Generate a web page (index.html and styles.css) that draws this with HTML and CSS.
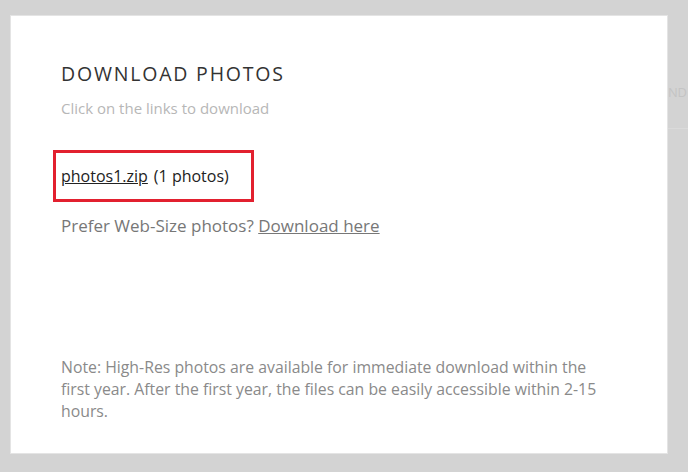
FILE: index.html
```html
<!DOCTYPE html>
<html>
<head>
<meta charset="utf-8">
<link rel="stylesheet" href="styles.css">
</head>
<body>
<div class="backdrop">
  <div class="bg-tab">ND</div>
</div>
<div class="overlay">
  <div class="modal">
    <h1 class="title">DOWNLOAD PHOTOS</h1>
    <p class="subtitle">Click on the links to download</p>
    <div class="file-box">
      <a class="file-link" href="#">photos1.zip</a><span class="count">(1 photos)</span>
    </div>
    <p class="websize">Prefer Web-Size photos? <a class="web-link" href="#">Download here</a></p>
    <p class="note">Note: High-Res photos are available for immediate download within the first year. After the first year, the files can be easily accessible within 2-15 hours.</p>
  </div>
</div>
</body>
</html>
```
FILE: styles.css
```css
html, body {
  margin: 0;
  padding: 0;
}
body {
  width: 688px;
  height: 472px;
  overflow: hidden;
  background: #d3d3d3;
  font-family: "Open Sans", "Noto Sans", sans-serif;
  position: relative;
}
.backdrop {
  position: absolute;
  inset: 0;
}
.bg-tab {
  position: absolute;
  left: 668px;
  top: 81px;
  width: 20px;
  font-size: 13px;
  letter-spacing: -0.3px;
  line-height: 22px;
  color: #c4c4c4;
  border-bottom: 1px solid #dadada;
  padding: 0 0 25px 0;
  white-space: nowrap;
}
.overlay {
  position: relative;
  padding: 16px 0 0 11px;
}
.modal {
  width: 656px;
  height: 437px;
  box-sizing: border-box;
  background: #fff;
  box-shadow: 0 0 0 1px #e4e4e4;
  padding: 46px 50px 0 50px;
  display: flex;
  flex-direction: column;
}
.title {
  margin: 0;
  font-weight: 400;
  font-size: 19.5px;
  letter-spacing: 1.8px;
  color: #333;
  line-height: 24px;
}
.subtitle {
  margin: 12px 0 0;
  font-size: 15px;
  color: #b7b7b7;
  line-height: 20px;
}
.file-box {
  margin: 32px 0 0 -8px;
  width: 201px;
  height: 52px;
  box-sizing: border-box;
  border: 3px solid #e2202f;
  padding: 0 0 0 5px;
  display: flex;
  align-items: center;
  gap: 6px;
  font-size: 16px;
  color: #222;
}
.file-link {
  color: #222;
  text-decoration: underline;
}
.count {
  color: #222;
}
.websize {
  margin: 12px 0 0;
  font-size: 17px;
  color: #777;
  line-height: 24px;
}
.web-link {
  color: #777;
  text-decoration: underline;
}
.note {
  margin: auto 0 31px;
  font-size: 15.8px;
  line-height: 22px;
  color: #8a8a8a;
}
```
